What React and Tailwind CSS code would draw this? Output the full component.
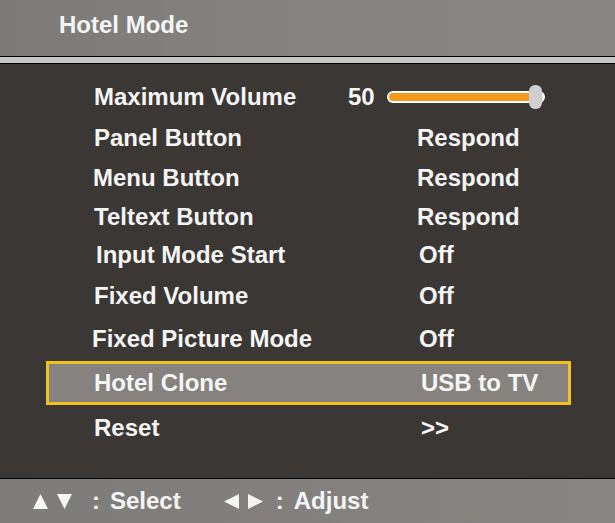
import React from "react";

const rows = [
  { label: "Panel Button", value: "Respond", h: "h-[41px]", pl: "pl-[48px]", vx: "w-[323px]" },
  { label: "Menu Button", value: "Respond", h: "h-[40px]", pl: "pl-[47px]", vx: "w-[324px]" },
  { label: "Teltext Button", value: "Respond", h: "h-[37px]", pl: "pl-[48px]", vx: "w-[323px]" },
  { label: "Input Mode Start", value: "Off", h: "h-[40px]", pl: "pl-[50px]", vx: "w-[323px]" },
  { label: "Fixed Volume", value: "Off", h: "h-[42px]", pl: "pl-[48px]", vx: "w-[325px]" },
  { label: "Fixed Picture Mode", value: "Off", h: "h-[44px]", pl: "pl-[46px]", vx: "w-[327px]" },
];

const font = "font-['Liberation_Sans',Arial,sans-serif] font-bold";

function Slider() {
  return (
    <div className="relative ml-[12px] flex h-[24px] w-[158px] items-center">
      <div className="h-[12px] w-full rounded-full bg-white p-[2px]">
        <div className="h-full w-[93%] rounded-full bg-[#f39a1b]" />
      </div>
      <div className="absolute left-[142px] top-0 h-[24px] w-[13px] rounded-[6px] bg-[#cfcfcf]" />
    </div>
  );
}

// footer arrow keys
function Tri({ dir }) {
  const pts = {
    up: "7.5,0 15,15 0,15",
    down: "0,0 15,0 7.5,15",
    left: "15,0 15,15 0,7.5",
    right: "0,0 0,15 15,7.5",
  }[dir];
  return (
    <svg width="15" height="15" viewBox="0 0 15 15" className="block">
      <polygon points={pts} fill="#f5f5f5" />
    </svg>
  );
}

export default function App() {
  return (
    <div className={`flex h-[523px] w-[615px] flex-col bg-[#3b3735] text-[24px] leading-none text-[#f5f5f5] ${font}`}>
      {/* header */}
      <div className="flex h-[56px] items-center bg-gradient-to-r from-[#7d7b79] via-[#858280] to-[#888684] pl-[59px] pb-[6px]">
        Hotel Mode
      </div>
      <div className="h-[8px] border-y border-black bg-[#c9c7c3]" />

      {/* body */}
      <div className="flex-1 pt-[13px]">
        <div className="ml-[46px] mr-[44px]">
          <div className="flex h-[40px] items-center pl-[48px]">
            <span className="w-[254px]">Maximum Volume</span>
            <span>50</span>
            <Slider />
          </div>
          {rows.map((r) => (
            <div key={r.label} className={`flex items-center ${r.h} ${r.pl}`}>
              <span className={r.vx}>{r.label}</span>
              <span>{r.value}</span>
            </div>
          ))}
          <div className="flex h-[44px] items-center border-[3px] border-[#f2c21c] bg-[#858280] pl-[45px]">
            <span className="w-[327px]">Hotel Clone</span>
            <span>USB to TV</span>
          </div>
          <div className="flex h-[45px] items-center pl-[48px]">
            <span className="w-[327px]">Reset</span>
            <span>&gt;&gt;</span>
          </div>
        </div>
      </div>

      {/* footer */}
      <div className="flex h-[45px] items-center border-t border-black bg-gradient-to-r from-[#7e7c7a] to-[#878482] pl-[33px]">
        <div className="flex gap-[9px]">
          <Tri dir="up" />
          <Tri dir="down" />
        </div>
        <span className="ml-[20px]">:</span>
        <span className="ml-[10px]">Select</span>
        <div className="ml-[43px] flex gap-[9px]">
          <Tri dir="left" />
          <Tri dir="right" />
        </div>
        <span className="ml-[13px]">:</span>
        <span className="ml-[10px]">Adjust</span>
      </div>
    </div>
  );
}
